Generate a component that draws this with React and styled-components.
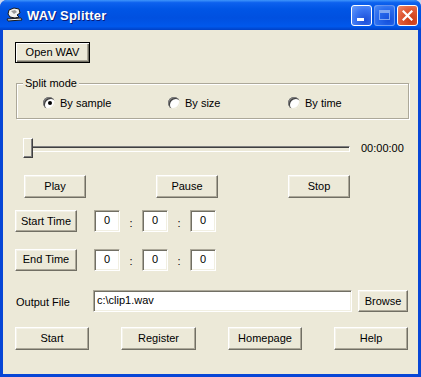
import React from "react";
import styled, { createGlobalStyle } from "styled-components";

const Global = createGlobalStyle`
    html, body {
        margin: 0;
        padding: 0;
        background: #c9d6ef;
    }
    * {
        box-sizing: border-box;
    }
`;

const Window = styled.div`
    width: 421px;
    height: 377px;
    display: flex;
    flex-direction: column;
    background: #0746d6;
    border-radius: 7px 7px 0 0;
    overflow: hidden;
    font-family: "Liberation Sans", Arial, sans-serif;
    font-size: 11px;
    color: #000;
`;

const TitleBar = styled.div`
    height: 30px;
    flex: none;
    display: flex;
    align-items: center;
    padding: 0 3px 0 6px;
    background: linear-gradient(to bottom, #3f95fb 0%, #0d61ee 9%, #0055e5 30%, #0050e0 60%, #0058ec 88%, #0041c6 100%);
`;

const Title = styled.div`
    flex: 1;
    margin-left: 4px;
    color: #fff;
    font-weight: bold;
    font-size: 13px;
    letter-spacing: 0.2px;
    text-shadow: 1px 1px 0 #0a1a78;
`;

const CaptionButton = styled.div`
    width: 21px;
    height: 21px;
    margin-left: 2px;
    border-radius: 3px;
    border: 1px solid ${p => p.$disabled ? "rgba(255,255,255,0.45)" : "#fff"};
    display: flex;
    align-items: center;
    justify-content: center;
    position: relative;
    background: ${p => p.$close
        ? "radial-gradient(circle at 70% 75%, #c93a13 0%, #e05a36 55%, #ef8a6c 100%)"
        : "radial-gradient(circle at 70% 75%, #1d4fd8 0%, #3a75f2 55%, #6a9dfa 100%)"};
    opacity: ${p => p.$disabled ? 0.7 : 1};
`;

const MinGlyph = styled.div`
    position: absolute;
    left: 5px;
    bottom: 4px;
    width: 7px;
    height: 3px;
    background: #fff;
`;

const MaxGlyph = styled.div`
    width: 11px;
    height: 10px;
    border: 1px solid #b7cdf8;
    border-top-width: 3px;
`;

const Client = styled.div`
    flex: 1;
    margin: 0 3px 3px;
    background: #ece9d8;
    display: flex;
    flex-direction: column;
`;

const Row = styled.div`
    display: flex;
    align-items: center;
    flex: none;
    margin-top: ${p => p.$top}px;
    padding-left: ${p => p.$left || 0}px;
    padding-right: ${p => p.$right || 0}px;
    height: ${p => p.$h}px;
    justify-content: ${p => p.$spread ? "space-between" : "flex-start"};
`;

const Button = styled.div`
    width: ${p => p.$w}px;
    height: ${p => p.$h || 23}px;
    flex: none;
    display: flex;
    align-items: center;
    justify-content: center;
    background: #ece9d8;
    border: 1px solid;
    border-color: ${p => p.$default ? "#000" : "#fff #716f64 #716f64 #fff"};
    box-shadow: ${p => p.$default
        ? "inset 1px 1px 0 #fff, inset -1px -1px 0 #716f64, inset -2px -2px 0 #aca899"
        : "inset -1px -1px 0 #aca899, inset 1px 1px 0 #f4f2e8"};
    margin-left: ${p => p.$ml || 0}px;
    padding-bottom: 1px;
`;

const Group = styled.div`
    margin: 20px 0 0 13px;
    width: 393px;
    height: 36px;
    flex: none;
    padding: 3px 0 0 26px;
    border: 1px solid #aca899;
    box-shadow: inset 1px 1px 0 #fff, 1px 1px 0 #fff;
    display: flex;
    align-items: center;
    position: relative;
`;

const Legend = styled.span`
    position: absolute;
    top: -7px;
    left: 6px;
    padding: 0 2px;
    background: #ece9d8;
    line-height: 12px;
`;

const RadioItem = styled.label`
    display: flex;
    align-items: center;
    width: ${p => p.$w ? `${p.$w}px` : "auto"};
`;

const RadioDot = styled.span`
    width: 12px;
    height: 12px;
    border-radius: 50%;
    background: radial-gradient(circle at 60% 60%, #fff 0%, #fff 50%, #e4e2d6 100%);
    box-shadow: inset 1px 1px 0 #808080, inset 2px 2px 0 #404040, inset -1px -1px 0 #ece9d8;
    margin-right: 5px;
    display: flex;
    align-items: center;
    justify-content: center;

    &::after {
        content: "";
        width: 4px;
        height: 4px;
        border-radius: 50%;
        background: ${p => p.$on ? "#000" : "transparent"};
        margin: 1px 0 0 1px;
    }
`;

const Track = styled.div`
    width: 327px;
    height: 20px;
    margin-left: 20px;
    position: relative;
    display: flex;
    align-items: center;

    &::before {
        content: "";
        flex: 1;
        height: 4px;
        margin-top: 1px;
        border-top: 1px solid #808080;
        border-left: 1px solid #808080;
        border-right: 1px solid #fff;
        border-bottom: 1px solid #fff;
        box-shadow: inset 1px 1px 0 #404040;
        background: #ece9d8;
    }
`;

const Thumb = styled.div`
    position: absolute;
    left: 0;
    top: 0;
    width: 10px;
    height: 20px;
    background: #ece9d8;
    border: 1px solid;
    border-color: #fff #404040 #404040 #fff;
    box-shadow: inset -1px -1px 0 #808080;
`;

const TimeLabel = styled.div`
    margin-left: 11px;
`;

const Field = styled.div`
    width: ${p => p.$w}px;
    height: 22px;
    flex: none;
    background: #fff;
    border: 1px solid;
    border-color: #aca899 #fff #fff #aca899;
    box-shadow: inset 1px 1px 0 #716f64, inset -1px -1px 0 #f1efe2;
    display: flex;
    align-items: center;
    justify-content: ${p => p.$center ? "center" : "flex-start"};
    padding: 0 3px 2px;
    margin-left: ${p => p.$ml || 0}px;
`;

const Colon = styled.div`
    width: 22px;
    text-align: center;
    flex: none;
    padding-top: 3px;
`;

const Label = styled.div`
    width: 77px;
    flex: none;
    padding-top: 2px;
`;

const TitleIcon = () => (
    <svg width="17" height="16" viewBox="0 0 17 16">
        <path d="M3 3 L8 1 L13 2 L14 6 L11 8 L13 10 L9 11 L4 10 L2 7 Z" fill="#f2f2f2" stroke="#1a1a1a" strokeWidth="1" />
        <path d="M5 4 L9 3 L11 5 L8 7 Z" fill="#9a9a9a" />
        <path d="M1 12 L15 11 L16 13 L2 14 Z" fill="#fff" stroke="#1a1a1a" strokeWidth="1" />
    </svg>
);

const CloseX = () => (
    <svg width="11" height="11" viewBox="0 0 11 11">
        <path d="M1.5 1.5 L9.5 9.5 M9.5 1.5 L1.5 9.5" stroke="#fff" strokeWidth="2.2" strokeLinecap="square" />
    </svg>
);

const TimeRow = ({label, top, h}) => (
    <Row $top={top} $left={12} $h={h}>
        <Button $w={62} $h={22}>{label}</Button>
        <Field $w={26} $ml={17} $center>0</Field>
        <Colon>:</Colon>
        <Field $w={26} $center>0</Field>
        <Colon>:</Colon>
        <Field $w={26} $center>0</Field>
    </Row>
);

export default function App() {
    return (
        <>
            <Global />
            <Window>
                <TitleBar>
                    <TitleIcon />
                    <Title>WAV Splitter</Title>
                    <CaptionButton><MinGlyph /></CaptionButton>
                    <CaptionButton $disabled><MaxGlyph /></CaptionButton>
                    <CaptionButton $close><CloseX /></CaptionButton>
                </TitleBar>
                <Client>
                    <Row $top={12} $left={12} $h={21}>
                        <Button $w={75} $h={21} $default>Open WAV</Button>
                    </Row>
                    <Group>
                        <Legend>Split mode</Legend>
                        <RadioItem $w={125}><RadioDot $on />By sample</RadioItem>
                        <RadioItem $w={120}><RadioDot />By size</RadioItem>
                        <RadioItem><RadioDot />By time</RadioItem>
                    </Group>
                    <Row $top={19} $h={20}>
                        <Track><Thumb /></Track>
                        <TimeLabel>00:00:00</TimeLabel>
                    </Row>
                    <Row $top={17} $left={21} $right={68} $h={23} $spread>
                        <Button $w={62}>Play</Button>
                        <Button $w={62}>Pause</Button>
                        <Button $w={62}>Stop</Button>
                    </Row>
                    <TimeRow label="Start Time" top={12} h={22} />
                    <TimeRow label="End Time" top={16} h={23} />
                    <Row $top={19} $left={13} $h={22}>
                        <Label>Output File</Label>
                        <Field $w={259}>c:\clip1.wav</Field>
                        <Button $w={50} $h={22} $ml={6}>Browse</Button>
                    </Row>
                    <Row $top={15} $left={12} $right={10} $h={23} $spread>
                        <Button $w={74}>Start</Button>
                        <Button $w={75}>Register</Button>
                        <Button $w={74}>Homepage</Button>
                        <Button $w={74}>Help</Button>
                    </Row>
                </Client>
            </Window>
        </>
    );
}
